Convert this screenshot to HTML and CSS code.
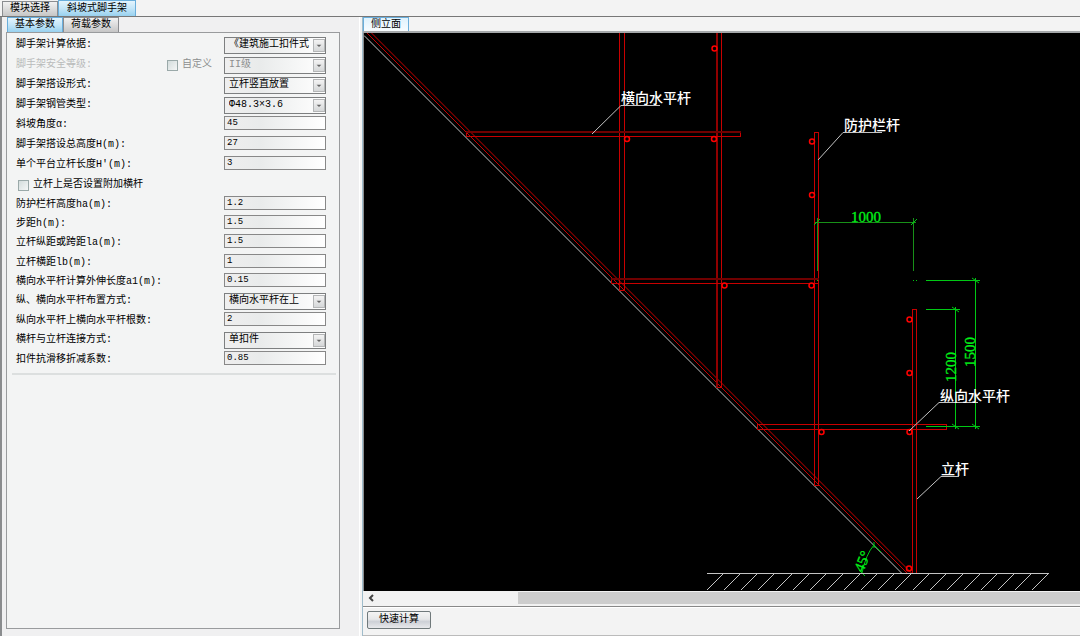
FILE: index.html
```html
<!DOCTYPE html>
<html lang="zh-CN">
<head>
<meta charset="utf-8">
<title>斜坡式脚手架</title>
<link rel="stylesheet" href="styles.css">
</head>
<body>
<svg width="0" height="0" class="defs" aria-hidden="true">
  <symbol id="arrow" viewBox="0 0 12 14"><path d="M3 6h6l-3 3z" fill="#666"/></symbol>
</svg>
<nav class="tabs tabs-main">
  <button class="tab">模块选择</button>
  <button class="tab active">斜坡式脚手架</button>
</nav>
<main class="workspace">
  <section class="side">
    <nav class="tabs tabs-side">
      <button class="tab active">基本参数</button>
      <button class="tab">荷载参数</button>
    </nav>
    <form class="panel">
      <div class="group">
        <div class="row"><label for="f1">脚手架计算依据:</label><span class="combo"><select id="f1"><option>《建筑施工扣件式</option></select><svg class="drop"><use href="#arrow"/></svg></span></div>
        <div class="row disabled"><label for="f2">脚手架安全等级:</label><label class="check custom"><input type="checkbox" disabled>自定义</label><span class="combo"><select id="f2" disabled><option>II级</option></select><svg class="drop"><use href="#arrow"/></svg></span></div>
        <div class="row"><label for="f3">脚手架搭设形式:</label><span class="combo"><select id="f3"><option>立杆竖直放置</option></select><svg class="drop"><use href="#arrow"/></svg></span></div>
        <div class="row"><label for="f4">脚手架钢管类型:</label><span class="combo"><select id="f4"><option>Φ48.3×3.6</option></select><svg class="drop"><use href="#arrow"/></svg></span></div>
        <div class="row"><label for="f5">斜坡角度α:</label><input id="f5" type="text" value="45"></div>
        <div class="row"><label for="f6">脚手架搭设总高度H(m):</label><input id="f6" type="text" value="27"></div>
        <div class="row"><label for="f7">单个平台立杆长度H'(m):</label><input id="f7" type="text" value="3"></div>
        <div class="row"><label class="check"><input type="checkbox">立杆上是否设置附加横杆</label></div>
      </div>
      <div class="group compact">
        <div class="row"><label for="f9">防护栏杆高度ha(m):</label><input id="f9" type="text" value="1.2"></div>
        <div class="row"><label for="f10">步距h(m):</label><input id="f10" type="text" value="1.5"></div>
        <div class="row tall"><label for="f11">立杆纵距或跨距la(m):</label><input id="f11" type="text" value="1.5"></div>
        <div class="row"><label for="f12">立杆横距lb(m):</label><input id="f12" type="text" value="1"></div>
        <div class="row"><label for="f13">横向水平杆计算外伸长度a1(m):</label><input id="f13" type="text" value="0.15"></div>
        <div class="row tall"><label for="f14">纵、横向水平杆布置方式:</label><span class="combo"><select id="f14"><option>横向水平杆在上</option></select><svg class="drop"><use href="#arrow"/></svg></span></div>
        <div class="row"><label for="f15">纵向水平杆上横向水平杆根数:</label><input id="f15" type="text" value="2"></div>
        <div class="row tall"><label for="f16">横杆与立杆连接方式:</label><span class="combo"><select id="f16"><option>单扣件</option></select><svg class="drop"><use href="#arrow"/></svg></span></div>
        <div class="row"><label for="f17">扣件抗滑移折减系数:</label><input id="f17" type="text" value="0.85"></div>
      </div>
    </form>
  </section>
  <section class="view">
    <nav class="tabs tabs-view"><button class="tab active">侧立面</button></nav>
    <div class="canvas">
      <svg width="716" height="558" viewBox="364 33 716 558" role="img" aria-label="侧立面">
        <g>
          <path class="ground" d="M364 35.5L902 573.5"/>
          <path class="red" d="M367 33L907.500 573.500M371.500 33L912 573.500"/>
        </g>
        <g class="red crisp">
          <path d="M619.5 33V290.5H624.5V33"/>
          <path d="M721.5 33V387.5H717.5"/>
          <path class="dim" d="M717 33V388" stroke-width="2"/>
          <path d="M814.5 485.5V132.5H818.5V485.5z"/>
          <path d="M912.5 573.5V309.5H916.5V573.5z"/>
          <path d="M466.5 136.5H740.5V132.5M466.5 132.5V136.5"/>
          <path class="dark" d="M466 132H741" stroke-width="2"/>
          <path d="M611.5 283.5H818.5M611.5 278.5V283.5"/>
          <path class="dark" d="M611 279H819" stroke-width="2"/>
          <path d="M757.5 424.5H946.5V429.5H757.5z"/>
        </g>
        <g class="rings">
          <circle cx="714.5" cy="48.5" r="2.5"/><circle cx="627" cy="139" r="2.5"/><circle cx="714" cy="139" r="2.5"/>
          <circle cx="812" cy="141.5" r="2.5"/><circle cx="812" cy="195" r="2.5"/><circle cx="724.5" cy="285.5" r="2.5"/>
          <circle cx="811.5" cy="285.5" r="2.5"/><circle cx="909.5" cy="319.5" r="2.5"/><circle cx="909.5" cy="373" r="2.5"/>
          <circle cx="821.5" cy="432" r="2.5"/><circle cx="909.5" cy="432" r="2.5"/><circle cx="909" cy="568.5" r="2.5"/>
        </g>
        <g class="green crisp">
          <path class="soft" d="M817.5 218V271M913.5 218V271M815 222.5H916"/>
          <path d="M926 280.5H980M926 309.5H960M926 426.5H980M955.5 307V429M975.5 278V429M913 280.5h1M916 280.5h1M817 280.5h1"/>
        </g>
        <path class="green" d="M814 225L820 219M911 225L917 219M952 307L959 312M972 278L979 283M952 424L959 429M972 424L979 429M874 545Q866 554 862 573M874 542V548M859 570L865 576M874 545L881 552"/>
        <g class="dims">
          <text x="851" y="222">1000</text>
          <text transform="translate(956 382) rotate(-90)">1200</text>
          <text transform="translate(975 367) rotate(-90)">1500</text>
          <text transform="translate(863 573) rotate(-68)">45°</text>
        </g>
        <path class="leader" d="M592 134L621 105.500H660M818 160L843 132.500H882M909 431L939 402.500H978M917 499L941 476.500H959"/>
        <path class="ground" d="M707 573.500H1049M724 573l-17 17M741 573l-17 17M758 573l-17 17M775 573l-17 17M793 573l-17 17M810 573l-17 17M827 573l-17 17M844 573l-17 17M861 573l-17 17M878 573l-17 17M895 573l-17 17M912 573l-17 17M930 573l-17 17M947 573l-17 17M964 573l-17 17M981 573l-17 17M998 573l-17 17M1015 573l-17 17M1032 573l-17 17M1049 573l-17 17"/>
        <g class="names">
          <text x="621" y="103">横向水平杆</text>
          <text x="844" y="130">防护栏杆</text>
          <text x="940" y="401">纵向水平杆</text>
          <text x="941" y="474">立杆</text>
        </g>
      </svg>
    </div>
    <div class="scrollbar">
      <button class="scroll-left" aria-label="向左滚动"><svg width="6" height="8" viewBox="0 0 6 8"><path d="M5 1L2 4l3 3" fill="none" stroke="#444" stroke-width="2"/></svg></button>
      <div class="thumb"></div>
    </div>
    <footer class="actions"><button class="run">快速计算</button></footer>
  </section>
</main>
</body>
</html>
```

FILE: styles.css
```css
* { box-sizing: border-box; }

body {
  margin: 0;
  height: 100vh;
  display: flex;
  flex-direction: column;
  overflow: hidden;
  background: #f3f3f3;
  color: #000;
  font: 10px/14px "Liberation Mono", "Noto Sans CJK SC", monospace;
}

button, input, select { font: inherit; color: inherit; margin: 0; }
.defs { position: absolute; }

/* tab strips */
.tabs { display: flex; align-items: flex-end; flex: none; }
.tab {
  height: 15px;
  padding: 0 7px;
  line-height: 14px;
  white-space: nowrap;
  border: 1px solid #8b8d90;
  border-bottom: 0;
  background: linear-gradient(#f1f1f1, #dcdcdc 50%, #c6c6c6);
}
.tab.active {
  height: 16px;
  border-color: #6aaedb;
  background: linear-gradient(#e4f4fd, #c3e5f8 50%, #98d1ef);
}
.tabs-main { height: 17px; padding-left: 2px; border-bottom: 1px solid #777; }
.tabs-main .tab.active { padding: 0 8px; }
.tabs-side { height: 15px; padding-left: 2px; }
.tabs-side .tab.active { height: 15px; }
.tabs-view { height: 16px; border-bottom: 2px solid #a5a8aa; }
.tabs-view .tab.active {
  height: 14px;
  padding: 0 7px;
  background: linear-gradient(#dff2fd, #f8fcfe);
}

.workspace { flex: 1; display: flex; min-height: 0; }

/* parameter panel */
.side {
  width: 360px;
  flex: none;
  display: flex;
  flex-direction: column;
  padding: 0 19px 7px 3px;
  border-left: 2px solid #8a8c8e;
  border-right: 1px solid #fff;
  background: #f0f0f1;
}
.panel {
  flex: 1;
  display: flex;
  flex-direction: column;
  margin-left: 1px;
  padding: 2px 3px 0 5px;
  border: 1px solid #999b9d;
  background: #f3f4f4;
}
.group { padding: 0 10px 0 4px; }
.compact { padding-bottom: 4px; border-bottom: 2px solid #dcdfdf; }
.row { display: flex; align-items: center; height: 20px; }
.compact .row { height: 19px; }
.compact .tall { height: 20px; }
.row > label:first-child { flex: 1; white-space: nowrap; }
.check { display: flex; align-items: center; gap: 4px; }
.custom { margin-right: 12px; }
input[type="checkbox"] {
  appearance: none;
  width: 11px;
  height: 11px;
  margin-left: 2px;
  border: 1px solid #9aa9a9;
  background: linear-gradient(135deg, #d3dcdc, #f4f6f6);
}
input[type="text"] {
  width: 102px;
  height: 14px;
  margin-bottom: 4px;
  padding: 0 2px;
  font-size: 9px;
  border: 1px solid #888;
  border-radius: 0;
  background: linear-gradient(90deg, #eee, #e9ebeb 35%, #fff);
}
.combo { position: relative; width: 102px; height: 17px; }
.combo select {
  appearance: none;
  display: block;
  width: 100%;
  height: 100%;
  padding: 0 12px 0 4px;
  border: 1px solid #7d7f80;
  border-radius: 0;
  opacity: 1;
  background: linear-gradient(90deg, #efefef, #e9ebeb 35%, #fff);
}
.drop {
  position: absolute;
  top: 2px;
  right: 1px;
  width: 12px;
  height: 13px;
  border: 1px solid #b4b6b7;
  background: linear-gradient(#f3f3f3, #d5d7d8);
  pointer-events: none;
}
.disabled > label:first-child { color: #b9bbbb; }
.disabled .custom, .disabled select { color: #8d8f8f; }

/* drawing view */
.view {
  flex: 1;
  min-width: 0;
  display: flex;
  flex-direction: column;
  margin-left: 2px;
  border-left: 1px solid #9fbccb;
}
.canvas {
  flex: 1;
  min-height: 0;
  overflow: hidden;
  border-left: 1px solid #8a8c8e;
  background: #000;
}
.canvas svg { display: block; }
.canvas path, .canvas circle { fill: none; }
.crisp { shape-rendering: crispEdges; }
.red { stroke: #c80000; }
.dim { stroke: #900000; }
.dark { stroke: #700000; }
.rings { stroke: #ff0000; stroke-width: 1.5; }
.green { stroke: #00c814; }
.soft { stroke: #189018; }
.ground { stroke: #c4c4c4; }
.leader { stroke: #c4c4c4; }
.dims { fill: #00f018; stroke: #00f018; stroke-width: 0.3; font: 15px "Liberation Serif", serif; }
.names { fill: #fff; font: 500 14px "Noto Sans CJK SC", sans-serif; }

.scrollbar {
  display: flex;
  height: 16px;
  flex: none;
  padding: 1px 0 2px;
  border-bottom: 1px solid #888;
  background: #f2f2f2;
}
.scroll-left {
  width: 155px;
  padding: 0 0 0 5px;
  display: flex;
  align-items: center;
  border: 0;
  background: none;
}
.thumb { flex: 1; background: #cdcdcd; }
.actions {
  height: 29px;
  flex: none;
  padding: 4px 4px 0;
  border-bottom: 1px solid #bbb;
  box-shadow: inset 0 1px #fff;
}
.run {
  height: 18px;
  padding: 0 11px;
  line-height: 16px;
  border: 1px solid #70797b;
  border-radius: 2px;
  background: linear-gradient(#f4f4f4, #e6e7e8 45%, #cdd0d6 60%, #e8e9ec);
}
```
